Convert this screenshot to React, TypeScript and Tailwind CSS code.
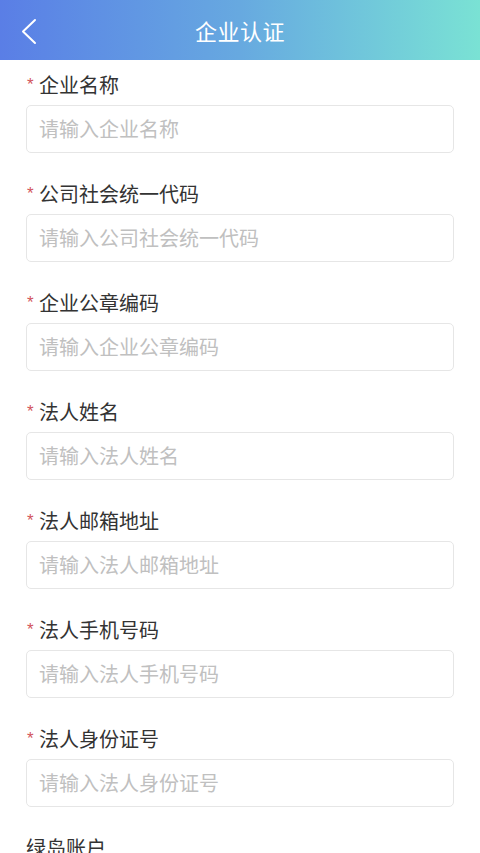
const FIELDS = [
  { label: "企业名称", required: true },
  { label: "公司社会统一代码", required: true },
  { label: "企业公章编码", required: true },
  { label: "法人姓名", required: true },
  { label: "法人邮箱地址", required: true },
  { label: "法人手机号码", required: true },
  { label: "法人身份证号", required: true },
];

function Field({ label, required }: { label: string; required: boolean }) {
  return (
    <div className="pb-[27px]">
      <div className="flex h-[28px] items-center text-[20px] leading-[28px] text-[#333333]">
        {required && (
          <span className="inline-block w-[13px] self-start pl-[1px] pt-[5px] text-[17px] leading-[18px] text-[#d2545c] [font-family:'Liberation_Sans',sans-serif]">
            *
          </span>
        )}
        <span>{label}</span>
      </div>
      <div className="mt-[6px] flex h-[48px] items-center rounded-[5px] border border-[#e6e6e6] px-[12px]">
        <input
          className="w-full bg-transparent text-[20px] text-[#333333] outline-none placeholder:text-[#c0c0c0]"
          placeholder={"请输入" + label}
        />
      </div>
    </div>
  );
}

export default function App() {
  return (
    <div className="min-h-screen bg-white [font-family:'Noto_Sans_CJK_SC',sans-serif]">
      <header className="relative flex h-[60px] items-center justify-center bg-gradient-to-r from-[#5a7ee6] via-[#67a9e0] to-[#7ae2d4] text-white">
        <button className="absolute left-[16px] top-[16px] h-[30px] w-[26px]">
          <svg width="26" height="30" viewBox="0 0 26 30" fill="none">
            <polyline
              points="19,4 7,15.5 19,27"
              stroke="white"
              strokeWidth="2"
              strokeLinecap="round"
              strokeLinejoin="round"
            />
          </svg>
        </button>
        <h1 className="text-[22px] font-normal tracking-[0.5px]">企业认证</h1>
      </header>
      <main className="px-[26px] pt-[11px]">
        {FIELDS.map((f) => (
          <Field key={f.label} label={f.label} required={f.required} />
        ))}
        <div className="h-[28px] text-[20px] leading-[28px] text-[#333333]">绿岛账户</div>
      </main>
    </div>
  );
}
